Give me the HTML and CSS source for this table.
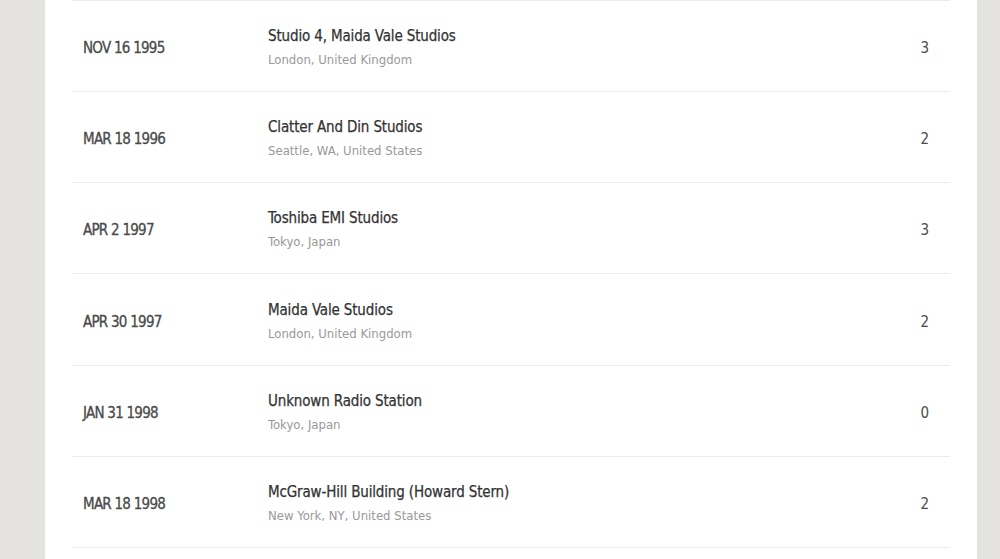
FILE: index.html
```html
<!DOCTYPE html>
<html>
<head>
<meta charset="utf-8">
<link rel="stylesheet" href="styles.css">
</head>
<body>
<div class="page">
  <div class="card">
    <div class="table">
      <div class="row">
        <div class="date">NOV 16 1995</div>
        <div class="venue"><div class="name">Studio 4, Maida Vale Studios</div><div class="place">London, United Kingdom</div></div>
        <div class="count">3</div>
      </div>
      <div class="row">
        <div class="date">MAR 18 1996</div>
        <div class="venue"><div class="name">Clatter And Din Studios</div><div class="place">Seattle, WA, United States</div></div>
        <div class="count">2</div>
      </div>
      <div class="row">
        <div class="date">APR 2 1997</div>
        <div class="venue"><div class="name">Toshiba EMI Studios</div><div class="place">Tokyo, Japan</div></div>
        <div class="count">3</div>
      </div>
      <div class="row">
        <div class="date">APR 30 1997</div>
        <div class="venue"><div class="name">Maida Vale Studios</div><div class="place">London, United Kingdom</div></div>
        <div class="count">2</div>
      </div>
      <div class="row">
        <div class="date">JAN 31 1998</div>
        <div class="venue"><div class="name">Unknown Radio Station</div><div class="place">Tokyo, Japan</div></div>
        <div class="count">0</div>
      </div>
      <div class="row">
        <div class="date">MAR 18 1998</div>
        <div class="venue"><div class="name">McGraw-Hill Building (Howard Stern)</div><div class="place">New York, NY, United States</div></div>
        <div class="count">2</div>
      </div>
      <div class="row row-empty"></div>
    </div>
  </div>
</div>
</body>
</html>
```

FILE: styles.css
```css
html, body {
  margin: 0;
  padding: 0;
  height: 559px;
  overflow: hidden;
  background: #e4e3df;
}
.page {
  padding: 0 23px 0 45px;
}
.card {
  background: #ffffff;
  padding: 0 27px;
}
.table {
  display: flex;
  flex-direction: column;
}
.row {
  display: flex;
  align-items: center;
  box-sizing: border-box;
  height: 91.17px;
  padding-top: 4px;
  border-top: 1px solid #ececec;
}
.row-empty {
  height: 40px;
}
.date {
  width: 185px;
  padding-left: 11px;
  font-family: "DejaVu Sans Condensed", "DejaVu Sans", sans-serif;
  font-size: 15px;
  font-weight: 400;
  color: #4a4a4a;
  letter-spacing: -0.75px;
  -webkit-text-stroke: 0.3px #4a4a4a;
}
.venue {
  flex: 1;
  display: flex;
  flex-direction: column;
  gap: 7px;
  margin-top: -2px;
}
.name {
  font-family: "DejaVu Sans Condensed", "DejaVu Sans", sans-serif;
  font-size: 15px;
  color: #333333;
  letter-spacing: -0.15px;
  -webkit-text-stroke: 0.25px #333333;
}
.place {
  font-family: "DejaVu Sans Condensed", "DejaVu Sans", sans-serif;
  font-size: 13px;
  color: #999999;
}
.count {
  width: 40px;
  padding-right: 21px;
  text-align: right;
  font-family: "DejaVu Sans Condensed", "DejaVu Sans", sans-serif;
  font-size: 15px;
  color: #4a4a4a;
}
```
